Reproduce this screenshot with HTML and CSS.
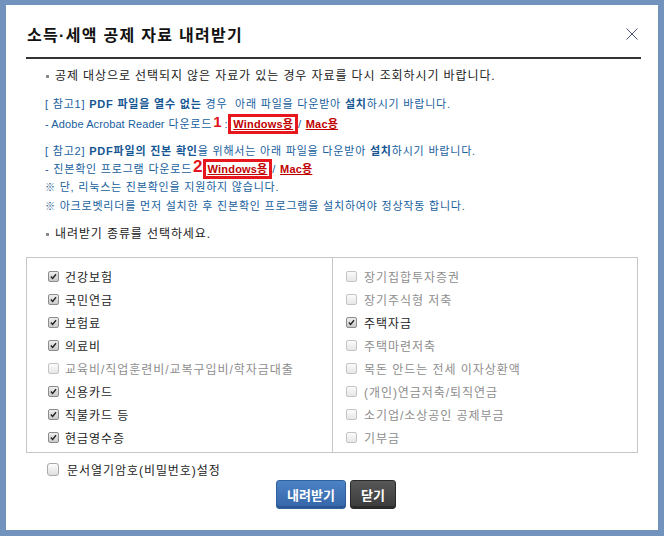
FILE: index.html
```html
<!DOCTYPE html>
<html lang="ko">
<head>
<meta charset="utf-8">
<link rel="stylesheet" href="styles.css">
</head>
<body>
<div class="frame">
  <div class="dialog">
    <div class="header">
      <h1 class="title">소득·세액 공제 자료 내려받기</h1>
      <svg class="close" width="12" height="12" viewBox="0 0 12 12"><path d="M0.5 0.5 L11.5 11.5 M11.5 0.5 L0.5 11.5" stroke="#4b5274" stroke-width="1" fill="none"/></svg>
    </div>
    <div class="content">
      <p class="bul line-a">공제 대상으로 선택되지 않은 자료가 있는 경우 자료를 다시 조회하시기 바랍니다.</p>
      <div class="info g1">
        <p>[ 참고1] <b>PDF 파일을 열수 없는</b> 경우&nbsp; 아래 파일을 다운받아 <b>설치</b>하시기 바랍니다.</p>
        <p><span class="lat">- Adobe Acrobat Reader</span> 다운로드<span class="num n1">1</span>: <a class="dl boxed">Windows용</a> / <a class="dl">Mac용</a></p>
      </div>
      <div class="info g2">
        <p>[ 참고2] <b>PDF파일의 진본 확인</b>을 위해서는 아래 파일을 다운받아 <b>설치</b>하시기 바랍니다.</p>
        <p>- 진본확인 프로그램 다운로드<span class="num n2">2</span><a class="dl boxed">Windows용</a> / <a class="dl">Mac용</a></p>
        <p><span class="ref">※</span> 단, 리눅스는 진본확인을 지원하지 않습니다.</p>
        <p><span class="ref">※</span> 아크로벳리더를 먼저 설치한 후 진본확인 프로그램을 설치하여야 정상작동 합니다.</p>
      </div>
      <p class="bul line-b">내려받기 종류를 선택하세요.</p>
      <div class="choices">
        <ul class="col col-left">
          <li><span class="cb on"><svg viewBox="0 0 11 11"><path d="M2.3 5.6 L4.4 7.8 L8.6 2.8" stroke="#222" stroke-width="1.7" fill="none"/></svg></span>건강보험</li>
          <li><span class="cb on"><svg viewBox="0 0 11 11"><path d="M2.3 5.6 L4.4 7.8 L8.6 2.8" stroke="#222" stroke-width="1.7" fill="none"/></svg></span>국민연금</li>
          <li><span class="cb on"><svg viewBox="0 0 11 11"><path d="M2.3 5.6 L4.4 7.8 L8.6 2.8" stroke="#222" stroke-width="1.7" fill="none"/></svg></span>보험료</li>
          <li><span class="cb on"><svg viewBox="0 0 11 11"><path d="M2.3 5.6 L4.4 7.8 L8.6 2.8" stroke="#222" stroke-width="1.7" fill="none"/></svg></span>의료비</li>
          <li class="off"><span class="cb"></span>교육비/직업훈련비/교복구입비/학자금대출</li>
          <li><span class="cb on"><svg viewBox="0 0 11 11"><path d="M2.3 5.6 L4.4 7.8 L8.6 2.8" stroke="#222" stroke-width="1.7" fill="none"/></svg></span>신용카드</li>
          <li><span class="cb on"><svg viewBox="0 0 11 11"><path d="M2.3 5.6 L4.4 7.8 L8.6 2.8" stroke="#222" stroke-width="1.7" fill="none"/></svg></span>직불카드 등</li>
          <li><span class="cb on"><svg viewBox="0 0 11 11"><path d="M2.3 5.6 L4.4 7.8 L8.6 2.8" stroke="#222" stroke-width="1.7" fill="none"/></svg></span>현금영수증</li>
        </ul>
        <ul class="col col-right">
          <li class="off"><span class="cb"></span>장기집합투자증권</li>
          <li class="off"><span class="cb"></span>장기주식형 저축</li>
          <li><span class="cb on"><svg viewBox="0 0 11 11"><path d="M2.3 5.6 L4.4 7.8 L8.6 2.8" stroke="#222" stroke-width="1.7" fill="none"/></svg></span>주택자금</li>
          <li class="off"><span class="cb"></span>주택마련저축</li>
          <li class="off"><span class="cb"></span>목돈 안드는 전세 이자상환액</li>
          <li class="off"><span class="cb"></span>(개인)연금저축/퇴직연금</li>
          <li class="off"><span class="cb"></span>소기업/소상공인 공제부금</li>
          <li class="off"><span class="cb"></span>기부금</li>
        </ul>
      </div>
      <div class="pw"><span class="cb big"></span>문서열기암호(비밀번호)설정</div>
      <div class="buttons">
        <button class="btn btn-blue">내려받기</button>
        <button class="btn btn-dark">닫기</button>
      </div>
    </div>
  </div>
</div>
</body>
</html>
```

FILE: styles.css
```css
* { box-sizing: border-box; }
html, body { margin: 0; padding: 0; }
body {
  width: 664px;
  height: 536px;
  overflow: hidden;
  font-family: "Liberation Sans", "Noto Sans CJK KR", sans-serif;
  background: #7393bf;
}
.frame {
  height: 536px;
  padding: 5px 6px 6px 6px;
  background: #7393bf;
}
.dialog {
  background: #fff;
  height: 100%;
}
.header {
  display: flex;
  align-items: center;
  justify-content: space-between;
  height: 54px;
  margin: 0 17px 0 20px;
  padding: 6px 3px 0 1px;
  border-bottom: 2px solid #333;
}
.title {
  margin: 0;
  font-size: 16px;
  font-weight: bold;
  color: #111;
  letter-spacing: 1.3px;
}
.close { display: block; }
.content {
  padding: 0 20px;
}
p { margin: 0; }
.bul {
  position: relative;
  padding-left: 29px;
  font-size: 12px;
  line-height: 18px;
  color: #222;
  letter-spacing: 0.9px;
}
.bul::before {
  content: "";
  position: absolute;
  left: 20px;
  top: 8px;
  width: 3px;
  height: 3px;
  background: #8a8a8a;
}
.line-a { margin-top: 8px; }
.line-b { margin-top: 9px; }
.info {
  padding-left: 19px;
  font-size: 11px;
  color: #17609d;
  letter-spacing: 0.8px;
}
.info b { color: #155693; }
.lat { letter-spacing: 0.1px; }
.g1 { margin-top: 9px; line-height: 20px; }
.g2 { margin-top: 8px; line-height: 18px; }
.num {
  display: inline-block;
  margin: 0 3px 0 1px;
  color: #e3131b;
  font-weight: bold;
  font-family: "Liberation Sans", sans-serif;
  letter-spacing: 0;
  vertical-align: top;
}
.n1 { font-size: 15px; line-height: 18px; margin-top: -1px; }
.n2 { font-size: 17px; line-height: 18px; margin: -2px 4px 0 1px; }
.dl {
  color: #c00000;
  font-weight: bold;
  text-decoration: underline;
  letter-spacing: 0.2px;
}
.boxed {
  outline: 3px solid #e8161d;
  outline-offset: 1px;
  padding: 0 1px;
}
.ref {
  font-weight: bold;
  color: #1a5a92;
  font-size: 10px;
}
.choices {
  display: flex;
  margin-top: 14px;
  border: 1px solid #c6c6c6;
}
.col {
  list-style: none;
  margin: 0;
  padding: 7px 0 3px;
}
.col-left {
  width: 306px;
  padding-left: 21px;
  border-right: 1px solid #c6c6c6;
}
.col-right {
  flex: 1;
  padding-left: 13px;
}
.col li {
  display: flex;
  align-items: center;
  height: 23px;
  font-size: 12px;
  color: #1e1e1e;
  letter-spacing: 0.95px;
}
.col li.off { color: #8e8e8e; }
.cb {
  display: inline-block;
  width: 11px;
  height: 11px;
  margin-right: 6px;
  border: 1px solid #c4c4c4;
  border-radius: 2px;
  background: linear-gradient(#fbfbfb, #e6e6e6);
  flex: none;
}
.cb.on {
  border-color: #8c8c8c;
  background: linear-gradient(#eeeeee, #c9c9c9);
}
.cb svg { display: block; width: 9px; height: 9px; }
.col-right .cb { margin-right: 7px; }
.pw {
  display: flex;
  align-items: center;
  height: 18px;
  margin-top: 7px;
  padding-left: 21px;
  font-size: 12px;
  color: #1e1e1e;
  letter-spacing: 0.95px;
}
.cb.big {
  width: 12px;
  height: 13px;
  margin-right: 8px;
  border-color: #a9a9a9;
  border-radius: 3px;
  background: linear-gradient(#fdfdfd, #dedede);
}
.buttons {
  display: flex;
  justify-content: center;
  gap: 4px;
  margin-top: 2px;
  padding-left: 8px;
}
.btn {
  height: 29px;
  padding: 0;
  border-radius: 3px;
  color: #fff;
  font-family: "Noto Sans CJK KR", sans-serif;
  font-size: 13px;
  font-weight: bold;
  border: 1px solid;
}
.btn-blue {
  width: 70px;
  background: linear-gradient(#4c83c5, #3465a8);
  border-color: #2f5f9c;
  box-shadow: inset 0 -2px 0 #2b5793;
}
.btn-dark {
  width: 46px;
  background: linear-gradient(#575757, #3b3b3b);
  border-color: #2a2a2a;
  box-shadow: inset 0 -2px 0 #2c2c2c;
}
```
